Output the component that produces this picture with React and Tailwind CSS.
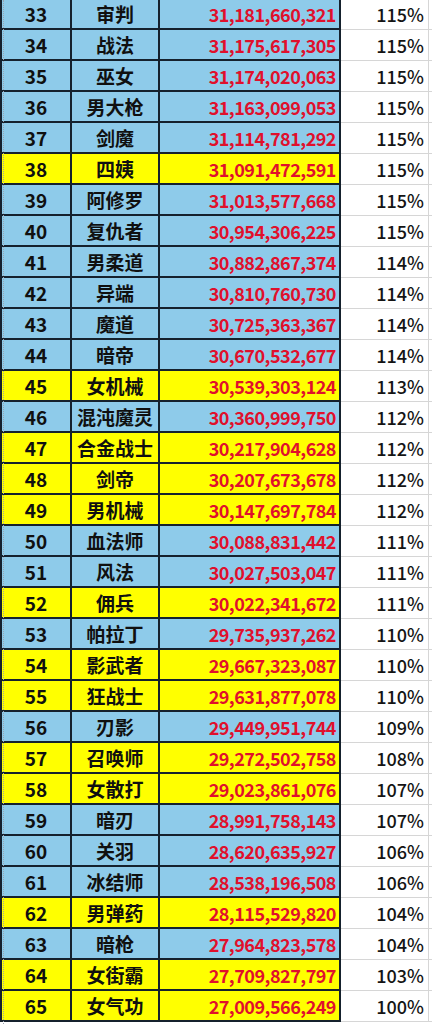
const rows = [
    [33, '审判', '31,181,660,321', '115%', 'b'],
    [34, '战法', '31,175,617,305', '115%', 'b'],
    [35, '巫女', '31,174,020,063', '115%', 'b'],
    [36, '男大枪', '31,163,099,053', '115%', 'b'],
    [37, '剑魔', '31,114,781,292', '115%', 'b'],
    [38, '四姨', '31,091,472,591', '115%', 'y'],
    [39, '阿修罗', '31,013,577,668', '115%', 'b'],
    [40, '复仇者', '30,954,306,225', '115%', 'b'],
    [41, '男柔道', '30,882,867,374', '114%', 'b'],
    [42, '异端', '30,810,760,730', '114%', 'b'],
    [43, '魔道', '30,725,363,367', '114%', 'b'],
    [44, '暗帝', '30,670,532,677', '114%', 'b'],
    [45, '女机械', '30,539,303,124', '113%', 'y'],
    [46, '混沌魔灵', '30,360,999,750', '112%', 'b'],
    [47, '合金战士', '30,217,904,628', '112%', 'y'],
    [48, '剑帝', '30,207,673,678', '112%', 'y'],
    [49, '男机械', '30,147,697,784', '112%', 'y'],
    [50, '血法师', '30,088,831,442', '111%', 'b'],
    [51, '风法', '30,027,503,047', '111%', 'b'],
    [52, '佣兵', '30,022,341,672', '111%', 'y'],
    [53, '帕拉丁', '29,735,937,262', '110%', 'b'],
    [54, '影武者', '29,667,323,087', '110%', 'y'],
    [55, '狂战士', '29,631,877,078', '110%', 'y'],
    [56, '刃影', '29,449,951,744', '109%', 'b'],
    [57, '召唤师', '29,272,502,758', '108%', 'y'],
    [58, '女散打', '29,023,861,076', '107%', 'y'],
    [59, '暗刃', '28,991,758,143', '107%', 'b'],
    [60, '关羽', '28,620,635,927', '106%', 'b'],
    [61, '冰结师', '28,538,196,508', '106%', 'b'],
    [62, '男弹药', '28,115,529,820', '104%', 'y'],
    [63, '暗枪', '27,964,823,578', '104%', 'b'],
    [64, '女街霸', '27,709,827,797', '103%', 'y'],
    [65, '女气功', '27,009,566,249', '100%', 'y'],
]

export default function App() {
    return (
        <div className="relative w-[432px] h-[1024px] overflow-hidden bg-white font-['Noto_Sans_CJK_SC','Noto_Sans',sans-serif]">
            <div className="-mt-[1px]">
                {rows.map(([n, name, val, pct, c]) => <Row key={n} n={n} name={name} val={val} pct={pct} yellow={c === 'y'} />)}
            </div>
            {/* page break guide */}
            <div className="absolute left-[3px] top-0 h-full border-l border-dotted border-[#9aa4b0]"></div>
        </div>
    )
}

function Row({ n, name, val, pct, yellow }) {
    const bg = yellow ? 'bg-[#ffff00]' : 'bg-[#8ecbea]'
    return (
        <div className="flex h-[31px]">
            <div className={`${bg} w-[72px] flex items-center justify-center border-l-2 border-r-2 border-b-2 border-[#15212d] text-[19px] font-bold text-[#101010] leading-none`}>
                {n}
            </div>
            <div className={`${bg} w-[88px] flex items-center justify-center border-r-2 border-b-2 border-[#15212d] text-[19px] font-bold text-[#101010] leading-none`}>
                {name}
            </div>
            <div className={`${bg} w-[181px] flex items-center justify-end pr-[3px] border-r-2 border-b-2 border-[#15212d] text-[18px] font-bold text-[#e0102c] leading-none tracking-[-0.5px]`}>
                {val}
            </div>
            <div className="w-[88px] flex items-center justify-end pr-[4px] border-r border-b border-[#d6d6d6] text-[18px] font-medium text-[#141414] leading-none">
                {pct}
            </div>
            <div className="flex-1 border-b border-[#d6d6d6]"></div>
        </div>
    )
}
